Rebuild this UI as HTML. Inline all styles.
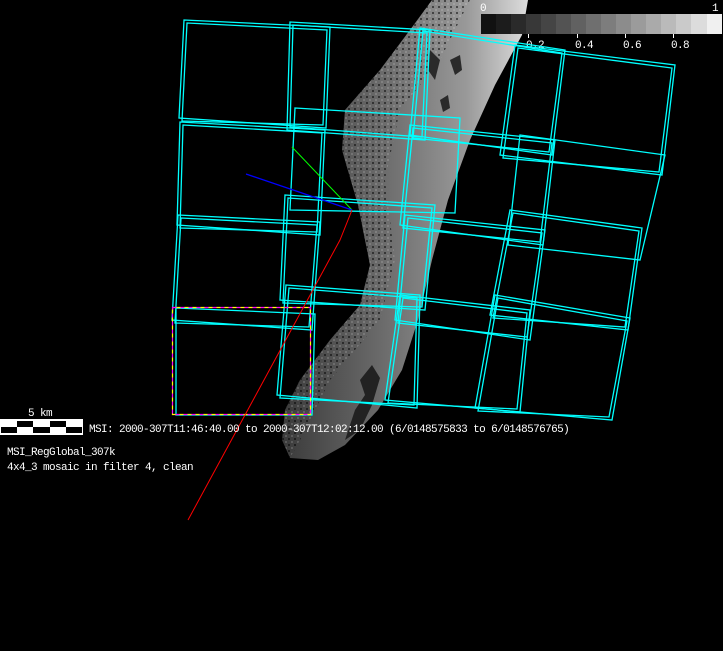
<!DOCTYPE html>
<html><head><meta charset="utf-8"><style>
html,body{margin:0;padding:0;background:#000;width:723px;height:651px;overflow:hidden}
svg{display:block}
text{font-family:"Liberation Mono","DejaVu Sans Mono",monospace;fill:#fff;font-size:11px;letter-spacing:-0.6px}
</style></head><body>
<svg width="723" height="651" viewBox="0 0 723 651" xmlns="http://www.w3.org/2000/svg">
<defs>
<linearGradient id="g" x1="0" y1="0" x2="1" y2="0">
<stop offset="0" stop-color="#3a3a3a"/>
<stop offset="0.4" stop-color="#6a6a6a"/>
<stop offset="0.75" stop-color="#999"/>
<stop offset="1" stop-color="#ddd"/>
</linearGradient>
<pattern id="p" width="6" height="6" patternUnits="userSpaceOnUse">
<rect width="6" height="6" fill="none"/>
<rect x="0" y="0" width="2" height="2" fill="#000" opacity="0.5"/>
<rect x="3" y="3" width="2" height="2" fill="#fff" opacity="0.15"/>
</pattern>
</defs>
<!-- asteroid band -->
<polygon fill="url(#g)" points="432,0 528,0 522,35 495,85 470,140 448,200 432,260 418,320 402,370 378,410 345,445 318,460 290,458 282,440 285,410 300,380 330,340 360,305 370,265 358,205 342,150 345,110 380,70 410,30"/>
<polygon fill="url(#p)" points="432,0 470,0 440,60 400,110 385,180 395,260 380,320 330,380 300,440 290,458 282,440 285,410 300,380 330,340 360,305 370,265 358,205 342,150 345,110 380,70 410,30"/>
<polygon fill="#222" points="345,440 355,410 365,395 360,380 372,365 380,378 372,405 360,430"/>
<polygon fill="#2a2a2a" points="430,50 440,60 435,80 428,70"/>
<polygon fill="#2a2a2a" points="450,60 460,55 462,70 455,75"/>
<polygon fill="#2a2a2a" points="440,100 448,95 450,108 443,112"/>
<!-- colorbar -->
<g>
<rect x="481" y="14" width="241" height="20" fill="#000"/>
<rect x="481" y="14" width="15" height="20" fill="#111"/>
<rect x="496" y="14" width="15" height="20" fill="#1c1c1c"/>
<rect x="511" y="14" width="15" height="20" fill="#2a2a2a"/>
<rect x="526" y="14" width="15" height="20" fill="#383838"/>
<rect x="541" y="14" width="15" height="20" fill="#454545"/>
<rect x="556" y="14" width="15" height="20" fill="#535353"/>
<rect x="571" y="14" width="15" height="20" fill="#616161"/>
<rect x="586" y="14" width="15" height="20" fill="#6f6f6f"/>
<rect x="601" y="14" width="15" height="20" fill="#7d7d7d"/>
<rect x="616" y="14" width="15" height="20" fill="#8c8c8c"/>
<rect x="631" y="14" width="15" height="20" fill="#9b9b9b"/>
<rect x="646" y="14" width="15" height="20" fill="#aaa"/>
<rect x="661" y="14" width="15" height="20" fill="#bababa"/>
<rect x="676" y="14" width="15" height="20" fill="#cacaca"/>
<rect x="691" y="14" width="16" height="20" fill="#dcdcdc"/>
<rect x="707" y="14" width="15" height="20" fill="#f0f0f0"/>
<g stroke="#fff" stroke-width="1">
<line x1="528.5" y1="34" x2="528.5" y2="38"/><line x1="577.5" y1="34" x2="577.5" y2="38"/>
<line x1="625.5" y1="34" x2="625.5" y2="38"/><line x1="673.5" y1="34" x2="673.5" y2="38"/>
</g>
<text x="480" y="11">0</text><text x="712" y="11" font-size="13">1</text>
<text x="526" y="48">0.2</text><text x="575" y="48">0.4</text><text x="623" y="48">0.6</text><text x="671" y="48">0.8</text>
</g>
<!-- cyan frames -->
<g fill="none" stroke="#0ff" stroke-width="1.3">
<polygon points="184,20 330,27 326,128 179,118"/><polygon points="187,23 327,30 323,125 182,121"/>
<polygon points="290,22 430,30 425,140 287,130"/><polygon points="293,25 427,33 422,137 290,127"/>
<polygon points="180,122 325,130 320,235 177,225"/><polygon points="183,125 322,133 317,232 180,228"/>
<polygon points="295,108 460,118 455,213 290,210"/>
<polygon points="178,215 320,222 312,330 172,320"/><polygon points="181,218 317,225 309,327 175,323"/>
<polygon points="285,195 435,205 425,310 280,300"/><polygon points="288,198 432,208 422,307 283,303"/>
<polygon points="176,308 315,314 312,415 176,415"/>
<polygon points="286,285 420,295 417,408 277,395"/><polygon points="289,288 417,298 414,405 280,398"/>
<polygon points="420,28 565,50 552,155 410,135"/><polygon points="423,31 562,53 549,152 413,138"/>
<polygon points="515,45 675,65 662,175 500,155"/><polygon points="518,48 672,68 659,172 503,158"/>
<polygon points="410,125 555,140 543,245 400,225"/><polygon points="413,128 552,143 540,242 403,228"/>
<polygon points="520,135 665,155 640,260 508,245"/>
<polygon points="405,215 545,230 530,340 395,320"/><polygon points="408,218 542,233 527,337 398,323"/>
<polygon points="510,210 642,228 628,330 490,315"/><polygon points="513,213 639,231 625,327 493,318"/>
<polygon points="400,295 530,310 520,412 385,400"/><polygon points="403,298 527,313 517,409 388,403"/>
<polygon points="495,295 630,318 612,420 475,408"/><polygon points="498,298 627,321 609,417 478,411"/>
</g>
<!-- dashed rect -->
<rect x="172.5" y="307.5" width="138" height="107" fill="none" stroke="#f0f" stroke-width="1.2" stroke-dasharray="4,4"/>
<rect x="172.5" y="307.5" width="138" height="107" fill="none" stroke="#ff0" stroke-width="1.2" stroke-dasharray="4,4" stroke-dashoffset="4"/>
<!-- axes -->
<line x1="292" y1="147" x2="352" y2="210" stroke="#0f0" stroke-width="1"/>
<line x1="246" y1="174" x2="352" y2="210" stroke="#00f" stroke-width="1.3"/>
<polyline points="352,210 340,240 188,520" fill="none" stroke="#f00" stroke-width="1"/>
<!-- scale bar -->
<rect x="0.5" y="419.5" width="82" height="15" fill="#fff" stroke="#fff"/>
<rect x="17" y="421" width="16" height="6" fill="#000"/><rect x="50" y="421" width="16" height="6" fill="#000"/>
<rect x="1" y="427" width="16" height="6" fill="#000"/><rect x="33" y="427" width="17" height="6" fill="#000"/><rect x="66" y="427" width="16" height="6" fill="#000"/>
<text x="28" y="416" font-size="12">5 km</text>
<text x="89" y="432">MSI:  2000-307T11:46:40.00 to 2000-307T12:02:12.00 (6/0148575833 to 6/0148576765)</text>
<text x="7" y="455">MSI_RegGlobal_307k</text>
<text x="7" y="470">4x4_3 mosaic in filter 4, clean</text>
</svg>
</body></html>
